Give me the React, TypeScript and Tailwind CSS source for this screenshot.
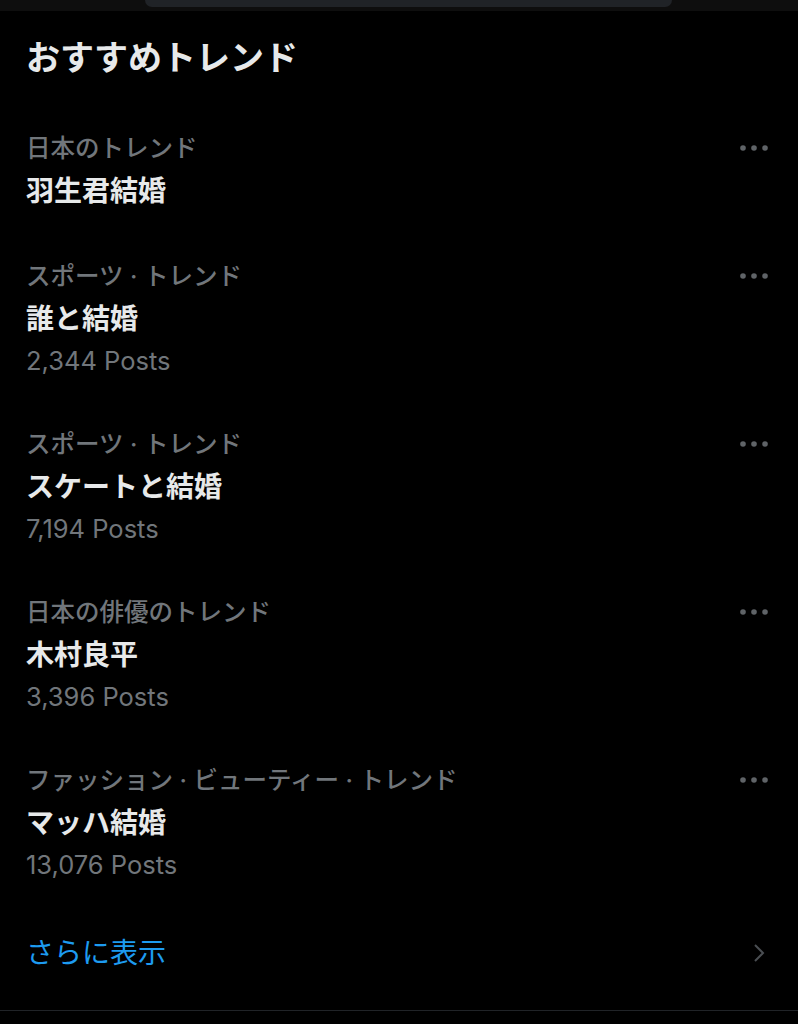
import React from 'react';

interface Trend {
  category: string;
  title: string;
  posts?: string;
}

const trends: Trend[] = [
  { category: '日本のトレンド', title: '羽生君結婚' },
  { category: 'スポーツ · トレンド', title: '誰と結婚', posts: '2,344 Posts' },
  { category: 'スポーツ · トレンド', title: 'スケートと結婚', posts: '7,194 Posts' },
  { category: '日本の俳優のトレンド', title: '木村良平', posts: '3,396 Posts' },
  { category: 'ファッション · ビューティー · トレンド', title: 'マッハ結婚', posts: '13,076 Posts' },
];

const font = { fontFamily: 'Inter, "Noto Sans CJK JP", sans-serif' };

const MoreDots = () => (
  <svg width="30" height="8" viewBox="0 0 30 8" className="shrink-0">
    <circle cx="4" cy="4" r="2.8" fill="#5f6367" />
    <circle cx="15" cy="4" r="2.8" fill="#5f6367" />
    <circle cx="26" cy="4" r="2.8" fill="#5f6367" />
  </svg>
);

const TrendItem: React.FC<{ trend: Trend }> = ({ trend }) => (
  <div className="py-[21px] pl-[26px] pr-[29px]">
    <div className="flex items-center justify-between h-[42px]">
      <span className="text-[24.5px] leading-[42px] font-medium text-[#71767b]">{trend.category}</span>
      <MoreDots />
    </div>
    <div className="text-[28px] leading-[44px] font-bold text-[#e7e9ea]">{trend.title}</div>
    {trend.posts && (
      <div className="text-[25.5px] leading-[40px] text-[#71767b]">{trend.posts}</div>
    )}
  </div>
);

export default function App() {
  return (
    <div className="min-h-[1024px] bg-black" style={font}>
      {/* top strip */}
      <div className="h-[11px] bg-[#0e0e0e]">
        <div className="ml-[145px] w-[527px] h-[7px] bg-[#202327] rounded-b-[24px]" />
      </div>

      {/* heading */}
      <div className="px-[26px] pt-[27px] pb-[28px]">
        <h2 className="text-[34px] leading-[40px] font-bold text-[#e7e9ea]">おすすめトレンド</h2>
      </div>

      {trends.map((t, i) => (
        <TrendItem key={i} trend={t} />
      ))}

      {/* show more */}
      <div className="h-[94px] flex items-center justify-between pl-[26px] pr-[33px]">
        <span className="text-[28px] leading-[40px] text-[#1d9bf0]">さらに表示</span>
        <svg width="12" height="20" viewBox="0 0 12 20" fill="none">
          <path d="M2 2l8 8-8 8" stroke="#4a4e52" strokeWidth="2" />
        </svg>
      </div>
      <div className="mt-[10px] border-t border-[#202327]" />
    </div>
  );
}
